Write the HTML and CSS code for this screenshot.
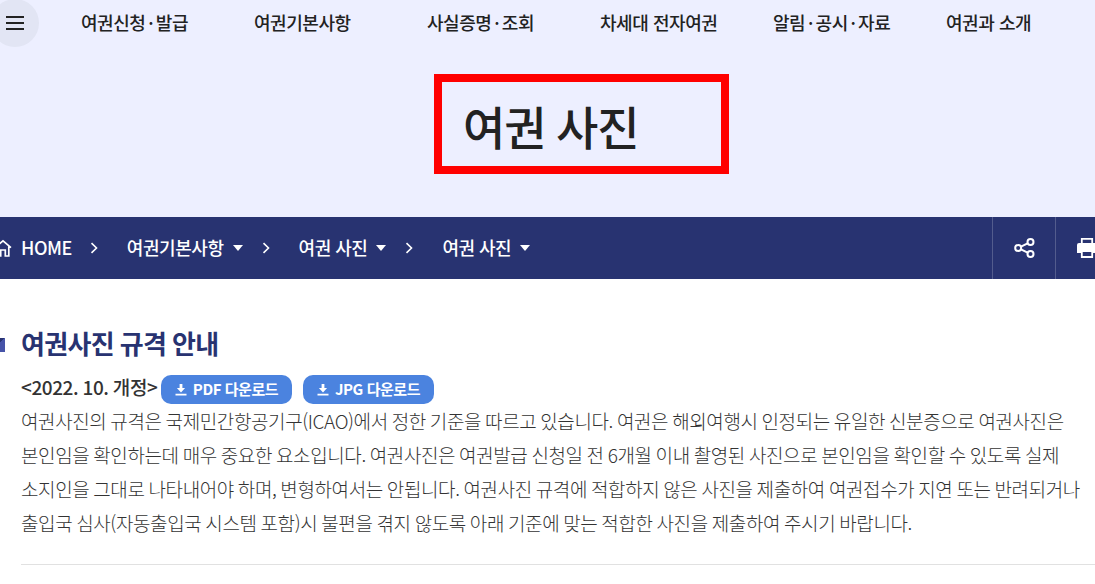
FILE: index.html
```html
<!DOCTYPE html>
<html lang="ko">
<head>
    <meta charset="UTF-8">
    <title>여권 사진</title>
    <link rel="stylesheet" href="styles.css">
</head>

<body>
    <header class="header">
        <button class="menu-btn" type="button">
            <span></span>
            <span></span>
            <span></span>
        </button>
        <nav class="gnb">
            <a href="#">여권신청<span class="dot">·</span>발급</a>
            <a href="#">여권기본사항</a>
            <a href="#">사실증명<span class="dot">·</span>조회</a>
            <a href="#">차세대 전자여권</a>
            <a href="#">알림<span class="dot">·</span>공시<span class="dot">·</span>자료</a>
            <a href="#">여권과 소개</a>
        </nav>
    </header>

    <div class="visual">
        <h1>여권 사진</h1>
    </div>

    <div class="location">
        <div class="path">
            <a href="#" class="home">
                <svg width="18" height="18" viewBox="0 0 18 18"><path d="M1 8.6L9 1.9l8 6.7M3.2 7.5V17h3.5v-6h4.6v6h3.5V7.5" fill="none" stroke="#fff" stroke-width="1.7"/></svg>
                <span>HOME</span>
            </a>
            <svg class="arrow" width="8" height="12" viewBox="0 0 8 12"><path d="M1.5 1.2L6.5 6l-5 4.8" fill="none" stroke="#fff" stroke-width="1.6"/></svg>
            <a href="#" class="depth"><span>여권기본사항</span></a>
            <svg class="arrow" width="8" height="12" viewBox="0 0 8 12"><path d="M1.5 1.2L6.5 6l-5 4.8" fill="none" stroke="#fff" stroke-width="1.6"/></svg>
            <a href="#" class="depth"><span>여권 사진</span></a>
            <svg class="arrow" width="8" height="12" viewBox="0 0 8 12"><path d="M1.5 1.2L6.5 6l-5 4.8" fill="none" stroke="#fff" stroke-width="1.6"/></svg>
            <a href="#" class="depth"><span>여권 사진</span></a>
        </div>
        <div class="util">
            <a href="#">
                <svg width="22" height="22" viewBox="0 0 22 22" fill="none" stroke="#fff" stroke-width="2"><path d="M8 9.7l6.6-3.4M8 12.3l6.6 3.4"/><circle cx="5.2" cy="11" r="3"/><circle cx="17.5" cy="5" r="3"/><circle cx="17.5" cy="17" r="3"/></svg>
            </a>
            <a href="#">
                <svg width="22" height="22" viewBox="0 0 22 22"><path d="M3 6h16q2 0 2 2v8H1V8q0-2 2-2z" fill="#fff"/><path d="M5.8 6V1.9h10.4V6M5.8 14h10.4v6H5.8z" fill="#283371" stroke="#fff" stroke-width="1.8"/></svg>
            </a>
        </div>
    </div>

    <main class="content">
        <h2>여권사진 규격 안내</h2>
        <div class="revision">
            <strong>&lt;2022. 10. 개정&gt;</strong>
            <a href="#" class="btn-down">
                <svg width="12" height="12" viewBox="0 0 12 12" fill="#fff"><path d="M4.6 0h2.8v4h2.7L6 8.4 1.9 4h2.7zM.5 9.8h11v1.8H.5z"/></svg>
                <span>PDF 다운로드</span>
            </a>
            <a href="#" class="btn-down">
                <svg width="12" height="12" viewBox="0 0 12 12" fill="#fff"><path d="M4.6 0h2.8v4h2.7L6 8.4 1.9 4h2.7zM.5 9.8h11v1.8H.5z"/></svg>
                <span>JPG 다운로드</span>
            </a>
        </div>
        <p>
            여권사진의 규격은 국제민간항공기구(ICAO)에서 정한 기준을 따르고 있습니다. 여권은 해외여행시 인정되는 유일한 신분증으로 여권사진은<br>
            본인임을 확인하는데 매우 중요한 요소입니다. 여권사진은 여권발급 신청일 전 6개월 이내 촬영된 사진으로 본인임을 확인할 수 있도록 실제<br>
            소지인을 그대로 나타내어야 하며, 변형하여서는 안됩니다. 여권사진 규격에 적합하지 않은 사진을 제출하여 여권접수가 지연 또는 반려되거나<br>
            출입국 심사(자동출입국 시스템 포함)시 불편을 겪지 않도록 아래 기준에 맞는 적합한 사진을 제출하여 주시기 바랍니다.
        </p>
    </main>
</body>
</html>
```

FILE: styles.css
```css
* {
    box-sizing: border-box;
}
body {
    margin: 0;
    background: #fff;
    color: #222;
    font-family: "Noto Sans CJK KR", sans-serif;
    font-size: 18px;
    letter-spacing: -0.45px;
    overflow: hidden;
}
a {
    color: inherit;
    text-decoration: none;
}
svg {
    display: block;
    flex: none;
}

/* header */
.header {
    display: flex;
    align-items: center;
    height: 47px;
    background: #edefff;
}
.menu-btn {
    display: flex;
    flex: none;
    flex-direction: column;
    align-items: center;
    justify-content: center;
    gap: 4px;
    width: 48px;
    height: 48px;
    margin: -1px 0 0 -9px;
    padding: 0;
    border: none;
    border-radius: 50%;
    background: #e2e5f4;
}
.menu-btn span {
    width: 18px;
    height: 2px;
    background: #222;
}
.gnb {
    display: grid;
    grid-template-columns: repeat(6, 173px);
    margin-left: 42px;
    padding-bottom: 2px;
    font-weight: 500;
    line-height: 45px;
    white-space: nowrap;
}
.gnb .dot {
    margin: 0 2.7px;
}

/* page title */
.visual {
    height: 170px;
    padding: 27px 0 0 434px;
    background: #edefff;
}
.visual h1 {
    width: 295px;
    height: 100px;
    margin: 0;
    padding-left: 21px;
    border: 8px solid #f00;
    font-size: 46px;
    font-weight: 500;
    letter-spacing: -1.15px;
    word-spacing: -1px;
    line-height: 87px;
}

/* location bar */
.location {
    display: flex;
    justify-content: space-between;
    height: 62px;
    background: #283371;
    color: #fff;
    font-weight: 500;
}
.location span {
    padding-bottom: 2px;
    word-spacing: -0.2px;
}
.path {
    display: flex;
    align-items: center;
    margin-left: -6px;
    white-space: nowrap;
}
.home {
    display: flex;
    align-items: center;
    gap: 9px;
}
.path .arrow {
    margin: 0 29px 0 19px;
}
.home + .arrow {
    margin-left: 18px;
}
.depth {
    display: flex;
    align-items: center;
}
.depth::after {
    content: "";
    margin-left: 9px;
    border: 5px solid transparent;
    border-top: 6px solid #fff;
    border-bottom: 0;
}
.util {
    display: flex;
    flex: none;
    margin-right: -23px;
}
.util a {
    display: flex;
    align-items: center;
    justify-content: center;
    width: 63px;
    border-left: 1px solid #535c8d;
}

/* content */
.content {
    margin-left: 21px;
    padding-top: 43px;
}
.content h2 {
    display: flex;
    align-items: center;
    height: 44px;
    margin: 0;
    padding-bottom: 2px;
    color: #283371;
    font-size: 26px;
    font-weight: 700;
    letter-spacing: -0.65px;
    word-spacing: -1px;
    line-height: 42px;
}
.content h2::before {
    content: "";
    width: 14px;
    height: 14px;
    margin: 4px 16px 0 -30px;
    background: linear-gradient(135deg, #283371 50%, #4653a8 50%);
}
.revision {
    display: flex;
    align-items: center;
    height: 29px;
    margin-top: 9px;
}
.revision strong {
    width: 140px;
    padding-bottom: 6px;
    color: #333;
    font-size: 19px;
    font-weight: 500;
    word-spacing: -0.5px;
    white-space: nowrap;
}
.btn-down {
    display: flex;
    align-items: center;
    justify-content: center;
    gap: 6px;
    width: 131px;
    height: 29px;
    margin-right: 11px;
    border-radius: 10px;
    background: #4b83df;
    color: #fff;
    font-size: 15px;
    font-weight: 700;
    white-space: nowrap;
}
.btn-down span {
    padding-bottom: 2px;
}
.content p {
    height: 161px;
    margin: 0;
    border-bottom: 1px solid #e1e1e1;
    color: #333;
    font-size: 19px;
    font-weight: 300;
    letter-spacing: -0.4px;
    word-spacing: -0.95px;
    line-height: 34px;
    white-space: nowrap;
}
```
